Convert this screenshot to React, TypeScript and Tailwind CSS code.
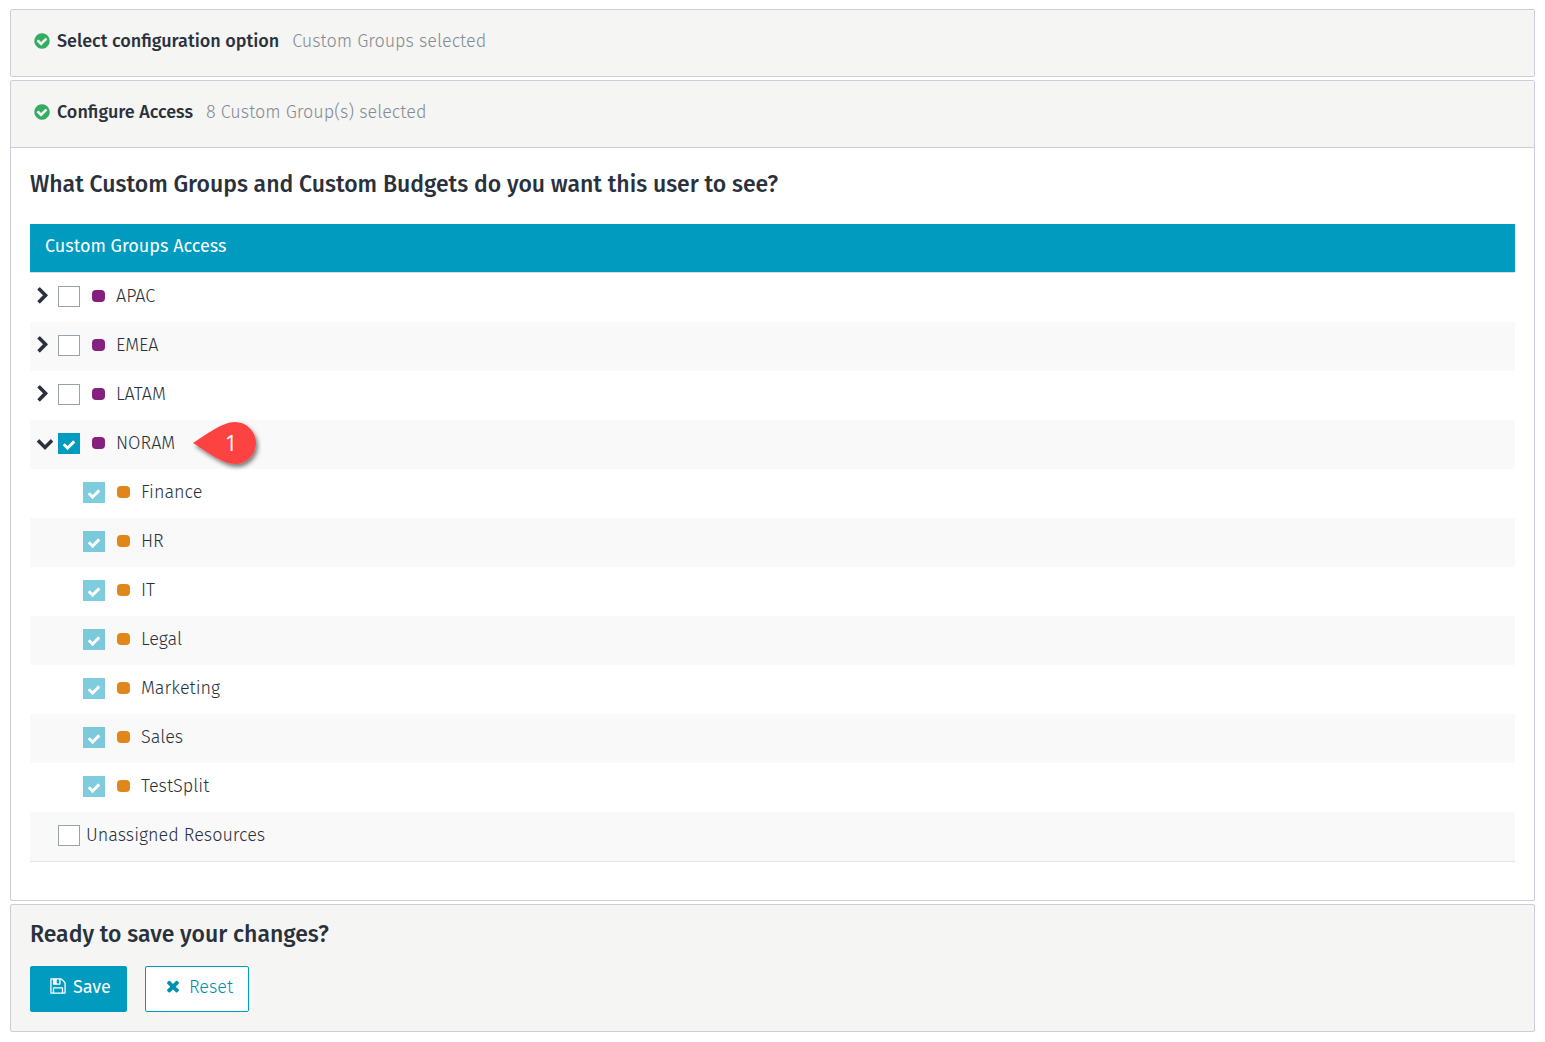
import { useState } from 'react'
import type { ReactNode } from 'react'

const ICONS = {
  check:
    'M1671 566q0 40-28 68l-724 724-136 136q-28 28-68 28t-68-28l-136-136-362-362q-28-28-28-68t28-68l136-136q28-28 68-28t68 28l294 295 656-657q28-28 68-28t68 28l136 136q28 28 28 68z',
  times:
    'M1490 1322q0 40-28 68l-136 136q-28 28-68 28t-68-28l-294-294-294 294q-28 28-68 28t-68-28l-136-136q-28-28-28-68t28-68l294-294-294-294q-28-28-28-68t28-68l136-136q28-28 68-28t68 28l294 294 294-294q28-28 68-28t68 28l136 136q28 28 28 68t-28 68l-294 294 294 294q28 28 28 68z',
  checkCircle:
    'M1412 734q0-28-18-46l-91-90q-19-19-45-19t-45 19l-408 407-226-226q-19-19-45-19t-45 19l-91 90q-18 18-18 46 0 27 18 45l362 362q19 19 45 19 27 0 46-19l543-543q18-18 18-45zm252 162q0 209-103 385.5t-279.5 279.5-385.5 103-385.5-103-279.5-279.5-103-385.5 103-385.5 279.5-279.5 385.5-103 385.5 103 279.5 279.5 103 385.5z',
  chevronRight:
    'M1363 877l-742 742q-19 19-45 19t-45-19l-166-166q-19-19-19-45t19-45l531-531-531-531q-19-19-19-45t19-45l166-166q19-19 45-19t45 19l742 742q19 19 19 45t-19 45z',
  chevronDown:
    'M1683 808l-742 741q-19 19-45 19t-45-19l-742-741q-19-19-19-45.5t19-45.5l166-165q19-19 45-19t45 19l531 531 531-531q19-19 45-19t45 19l166 165q19 19 19 45.5t-19 45.5z',
  floppy:
    'M512 1536h768v-384h-768v384zm896 0h128v-896q0-14-10-38.5t-20-34.5l-281-281q-10-10-34-20t-39-10v416q0 40-28 68t-68 28h-576q-40 0-68-28t-28-68v-416h-128v1280h128v-416q0-40 28-68t68-28h832q40 0 68 28t28 68v416zm-384-928v-320q0-13-9.5-22.5t-22.5-9.5h-192q-13 0-22.5 9.5t-9.5 22.5v320q0 13 9.5 22.5t22.5 9.5h192q13 0 22.5-9.5t9.5-22.5zm640 32v928q0 40-28 68t-68 28h-1344q-40 0-68-28t-28-68v-1344q0-40 28-68t68-28h928q40 0 88 20t76 48l280 280q28 28 48 76t20 88z',
}

function Icon({ name, className }: { name: keyof typeof ICONS; className: string }) {
  return (
    <svg viewBox="0 0 1792 1792" fill="currentColor" aria-hidden="true" className={className}>
      <path d={ICONS[name]} />
    </svg>
  )
}

type Group = { id: string; name: string; children?: string[] }

const GROUPS: Group[] = [
  { id: 'apac', name: 'APAC' },
  { id: 'emea', name: 'EMEA' },
  { id: 'latam', name: 'LATAM' },
  {
    id: 'noram',
    name: 'NORAM',
    children: ['Finance', 'HR', 'IT', 'Legal', 'Marketing', 'Sales', 'TestSplit'],
  },
]

function CheckBox({
  id,
  checked,
  disabled,
  onChange,
}: {
  id: string
  checked: boolean
  disabled?: boolean
  onChange?: (v: boolean) => void
}) {
  return (
    <span className="grid shrink-0 place-items-center pt-0.5">
      <input
        id={id}
        type="checkbox"
        checked={checked}
        disabled={disabled}
        onChange={(e) => onChange?.(e.target.checked)}
        className="col-start-1 row-start-1 h-[21px] w-[22px] appearance-none border border-[#9aa0ad] bg-white checked:border-[#009bbf] checked:bg-[#009bbf] disabled:opacity-50"
      />
      {checked && (
        <Icon
          name="check"
          className="pointer-events-none relative col-start-1 row-start-1 mt-0.5 size-[14px] text-white"
        />
      )}
    </span>
  )
}

function Row({ children, indent }: { children: ReactNode; indent: string }) {
  return (
    <tr className="even:bg-[#f9f9f9]">
      <td className="p-0">
        <div className={`flex h-[49px] items-center pb-[3px] ${indent}`}>{children}</div>
      </td>
    </tr>
  )
}

function Dot({ className }: { className: string }) {
  return <span className={`ml-3 mr-[11px] h-3 w-[13px] shrink-0 rounded ${className}`} />
}

function StepHeader({ title, note }: { title: string; note: string }) {
  return (
    <div className="flex h-[66px] items-center bg-[#f5f5f3] pb-1 pl-[22px]">
      <Icon name="checkCircle" className="size-[18px] shrink-0 text-[#34ad62]" />
      <h2 className="ml-[6px] font-medium">{title}</h2>
      <span className="ml-[13px] font-light text-[#858b95]">{note}</span>
    </div>
  )
}

function Callout({ label }: { label: string }) {
  return (
    <svg
      width="76"
      height="60"
      viewBox="0 0 76 60"
      className="absolute left-[11px] top-1/2 -translate-y-1/2"
      aria-hidden="true"
    >
      <defs>
        <filter id="pin-shadow" x="-20%" y="-20%" width="150%" height="160%">
          <feDropShadow dx="2" dy="3" stdDeviation="2" floodColor="#000" floodOpacity="0.5" />
        </filter>
      </defs>
      <path
        d="M7 30C20 22 36 9 49 9A21 21 0 0 1 49 51C36 51 20 38 7 30Z"
        fill="#fd4343"
        filter="url(#pin-shadow)"
      />
      <text x="45" y="38" textAnchor="middle" fill="#fff" className="font-['Open_Sans',sans-serif] text-[22px] font-normal">
        {label}
      </text>
    </svg>
  )
}

export default function App() {
  const [checked, setChecked] = useState<Record<string, boolean>>({ noram: true })
  const [open, setOpen] = useState<Record<string, boolean>>({ noram: true })
  const toggle = (id: string) => (v: boolean) => setChecked((c) => ({ ...c, [id]: v }))

  return (
    <main className="flex flex-col gap-[3px] bg-white px-[10px] py-[9px] font-['Fira_Sans','Noto_Sans',sans-serif] text-lg/6 text-[#2a313c]">
      <section className="rounded-xs border border-[#cccdd9]">
        <StepHeader title="Select configuration option" note="Custom Groups selected" />
      </section>

      <section className="rounded-xs border border-[#cccdd9]">
        <StepHeader title="Configure Access" note="8 Custom Group(s) selected" />
        <div className="border-t border-[#cccdd9] px-[19px] pb-[38px] pt-5">
          <h1 className="text-[23px]/8 font-medium">
            What Custom Groups and Custom Budgets do you want this user to see?
          </h1>
          <table className="mt-6 w-full border-b border-[#e4e5e8]">
            <thead>
              <tr className="border-b border-[#dcdde0] bg-[#009bbf] text-left text-white">
                <th className="h-12 p-0 pb-1 pl-[15px] font-normal">Custom Groups Access</th>
              </tr>
            </thead>
            <tbody>
              {GROUPS.flatMap((g) => [
                <Row key={g.id} indent={open[g.id] ? 'pl-[6px]' : 'pl-1'}>
                  <button
                    type="button"
                    aria-label={`${open[g.id] ? 'Collapse' : 'Expand'} ${g.name}`}
                    aria-expanded={!!open[g.id]}
                    onClick={() => setOpen((o) => ({ ...o, [g.id]: !o[g.id] }))}
                    className={`shrink-0 ${open[g.id] ? 'w-[22px]' : 'w-6'}`}
                  >
                    <Icon name={open[g.id] ? 'chevronDown' : 'chevronRight'} className="size-[18px]" />
                  </button>
                  <CheckBox id={g.id} checked={!!checked[g.id]} onChange={toggle(g.id)} />
                  <Dot className="bg-[#85207f]" />
                  <label htmlFor={g.id} className="font-light">
                    {g.name}
                  </label>
                  {g.id === 'noram' && (
                    <span className="relative">
                      <Callout label="1" />
                    </span>
                  )}
                </Row>,
                ...(open[g.id] && g.children ? g.children : []).map((c) => (
                  <Row key={c} indent="pl-[53px]">
                    <CheckBox id={c} checked={!!checked[g.id]} disabled />
                    <Dot className="bg-[#e0861a]" />
                    <label htmlFor={c} className="font-light">
                      {c}
                    </label>
                  </Row>
                )),
              ])}
              <Row indent="pl-7">
                <CheckBox id="unassigned" checked={!!checked.unassigned} onChange={toggle('unassigned')} />
                <label htmlFor="unassigned" className="ml-[6px] font-light">
                  Unassigned Resources
                </label>
              </Row>
            </tbody>
          </table>
        </div>
      </section>

      <section className="rounded-xs border border-[#cccdd9] bg-[#f5f5f3] px-[19px] pb-[19px] pt-[13px]">
        <h2 className="text-[23px]/8 font-medium">Ready to save your changes?</h2>
        <div className="mt-4 flex gap-[18px]">
          <button
            type="button"
            className="flex h-[46px] items-center rounded-xs border border-[#009bbf] bg-[#009bbf] pb-1 pl-[18px] pr-[15px] text-white"
          >
            <Icon name="floppy" className="mb-0.5 mr-[6px] size-[18px]" />
            Save
          </button>
          <button
            type="button"
            className="flex h-[46px] items-center rounded-xs border border-[#009bbf] bg-white pb-1 pl-[18px] pr-[15px] font-light text-[#008fb1]"
          >
            <Icon name="times" className="mb-0.5 mr-[7px] size-[18px]" />
            Reset
          </button>
        </div>
      </section>
    </main>
  )
}
